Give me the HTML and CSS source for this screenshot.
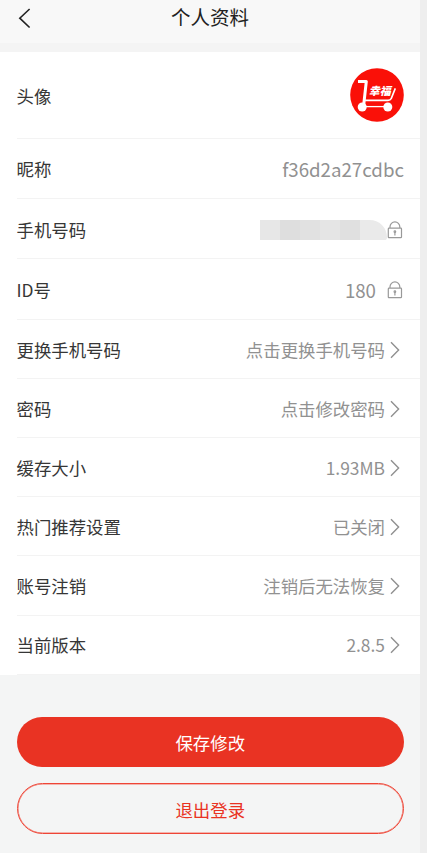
FILE: index.html
```html
<!DOCTYPE html>
<html lang="zh-CN">
<head>
<meta charset="utf-8">
<title>个人资料</title>
<link rel="stylesheet" href="styles.css">
</head>
<body>
<svg class="defs" aria-hidden="true">
  <symbol id="chevron" viewBox="0 0 10 18"><path d="M1 1.3 8.6 9 1 16.7"/></symbol>
  <symbol id="lock" viewBox="0 0 16 18"><rect x="1.3" y="7.1" width="13.2" height="9.6" rx=".8"/><path d="M3 7.1V5.8a4.9 4.9 0 0 1 9.8 0v1.3M7.9 10.8v3.6"/><circle cx="7.9" cy="10.7" r=".8"/></symbol>
</svg>
<main class="screen">
  <header class="bar">
    <svg class="back" viewBox="0 0 13 21"><path d="M11.6 1 1.8 10.2l9.8 9.3"/></svg>
    <h1>个人资料</h1>
  </header>
  <section class="list">
    <div class="row row-avatar"><span>头像</span>
      <svg class="avatar" viewBox="0 0 54 54">
        <circle cx="27" cy="27" r="26.8" fill="#fa1008"/>
        <g fill="none" stroke="#fff" stroke-linejoin="round">
          <path d="M8 13.5h8.3L13.8 36" stroke-width="3"/>
          <path d="M14 32.4h24q2.3 0 3.3-2l4-10" stroke-width="1.6"/>
          <path d="M13 38.6h25" stroke-width="1.3"/>
        </g>
        <circle cx="12.2" cy="39" r="4.5" fill="#fff"/>
        <circle cx="37.8" cy="39" r="4.5" fill="#fff"/>
        <text class="brand" x="18.8" y="27">幸福</text>
      </svg>
    </div>
    <div class="row"><span>昵称</span><span class="value big">f36d2a27cdbc</span></div>
    <div class="row"><span>手机号码</span><span class="value"><span class="mask"><i></i><i></i><i></i><i></i><i></i><i></i><i></i></span><svg class="lock"><use href="#lock"/></svg></span></div>
    <div class="row"><span>ID号</span><span class="value big"><span class="number">180</span><svg class="lock"><use href="#lock"/></svg></span></div>
    <div class="row short"><span>更换手机号码</span><span class="value">点击更换手机号码<svg class="chevron"><use href="#chevron"/></svg></span></div>
    <div class="row short"><span>密码</span><span class="value">点击修改密码<svg class="chevron"><use href="#chevron"/></svg></span></div>
    <div class="row short"><span>缓存大小</span><span class="value">1.93MB<svg class="chevron"><use href="#chevron"/></svg></span></div>
    <div class="row short"><span>热门推荐设置</span><span class="value">已关闭<svg class="chevron"><use href="#chevron"/></svg></span></div>
    <div class="row short"><span>账号注销</span><span class="value">注销后无法恢复<svg class="chevron"><use href="#chevron"/></svg></span></div>
    <div class="row short"><span>当前版本</span><span class="value">2.8.5<svg class="chevron"><use href="#chevron"/></svg></span></div>
  </section>
  <div class="actions">
    <button class="save">保存修改</button>
    <button class="logout">退出登录</button>
  </div>
</main>
</body>
</html>
```
FILE: styles.css
```css
* { box-sizing: border-box; }
body {
  margin: 0;
  height: 853px;
  overflow: hidden;
  background: #eee;
  color: #363636;
  font: 17.4px/26px "Noto Sans CJK SC", sans-serif;
}
.defs { display: none; }
.screen { width: 420px; height: 853px; background: #f4f5f5; }
.bar {
  display: grid;
  grid-template-columns: 32px 1fr 32px;
  align-items: start;
  height: 51.5px;
  background: linear-gradient(#f8f8f8 43.5px, #f4f4f4 43.5px);
}
.back { width: 13px; height: 21px; margin: 8px 0 0 18px; fill: none; stroke: #222; stroke-width: 1.6; }
h1 { margin: 3px 0 0; text-align: center; font-size: 19.5px; line-height: 28px; font-weight: 400; color: #222; }
.list { background: #fff; padding-left: 16.5px; }
.row {
  display: flex;
  align-items: center;
  justify-content: space-between;
  height: 60.2px;
  padding: 1.8px 16px 0 0;
  border-bottom: 1px solid #f3f3f3;
}
.row-avatar { height: 87.5px; padding-top: 1px; }
.row-avatar span { padding-top: 2px; }
.short { height: 59.2px; }
.avatar { width: 54px; height: 54px; }
.brand { font-size: 11px; font-weight: 900; font-style: italic; fill: #fff; }
.value { display: flex; align-items: center; color: #919191; }
.big { font-size: 18.7px; }
.number { margin-right: 11px; }
.lock { width: 16px; height: 18px; margin: 0 1px 0 0; fill: none; stroke: #999; stroke-width: 1.2; }
.mask { display: flex; width: 127px; height: 20px; border-radius: 0 20px 3px 0; overflow: hidden; }
.mask i { flex: 0 0 20px; background: #e7e7e7; }
.mask i:nth-child(2) { background: #dedede; }
.mask i:nth-child(3) { background: #e1e1e1; }
.mask i:nth-child(4) { background: #e5e5e5; }
.mask i:nth-child(5) { background: #e0e0e0; }
.mask i:nth-child(n+6) { background: #eaeaea; }
.chevron { width: 10px; height: 18px; margin: 0 4px 0 5px; fill: none; stroke: #909090; stroke-width: 1.4; }
.actions { display: flex; flex-direction: column; gap: 16px; padding: 42px 16.5px 0 17px; }
button {
  height: 50.6px;
  padding: 2px 0 0;
  border: 0;
  border-radius: 26px;
  font: inherit;
}
.save { background: #e93323; color: #fff; }
.logout { background: transparent; border: 1px solid #ee4536; box-shadow: inset 0 0 0 .5px #f27468; color: #e93323; }
```
